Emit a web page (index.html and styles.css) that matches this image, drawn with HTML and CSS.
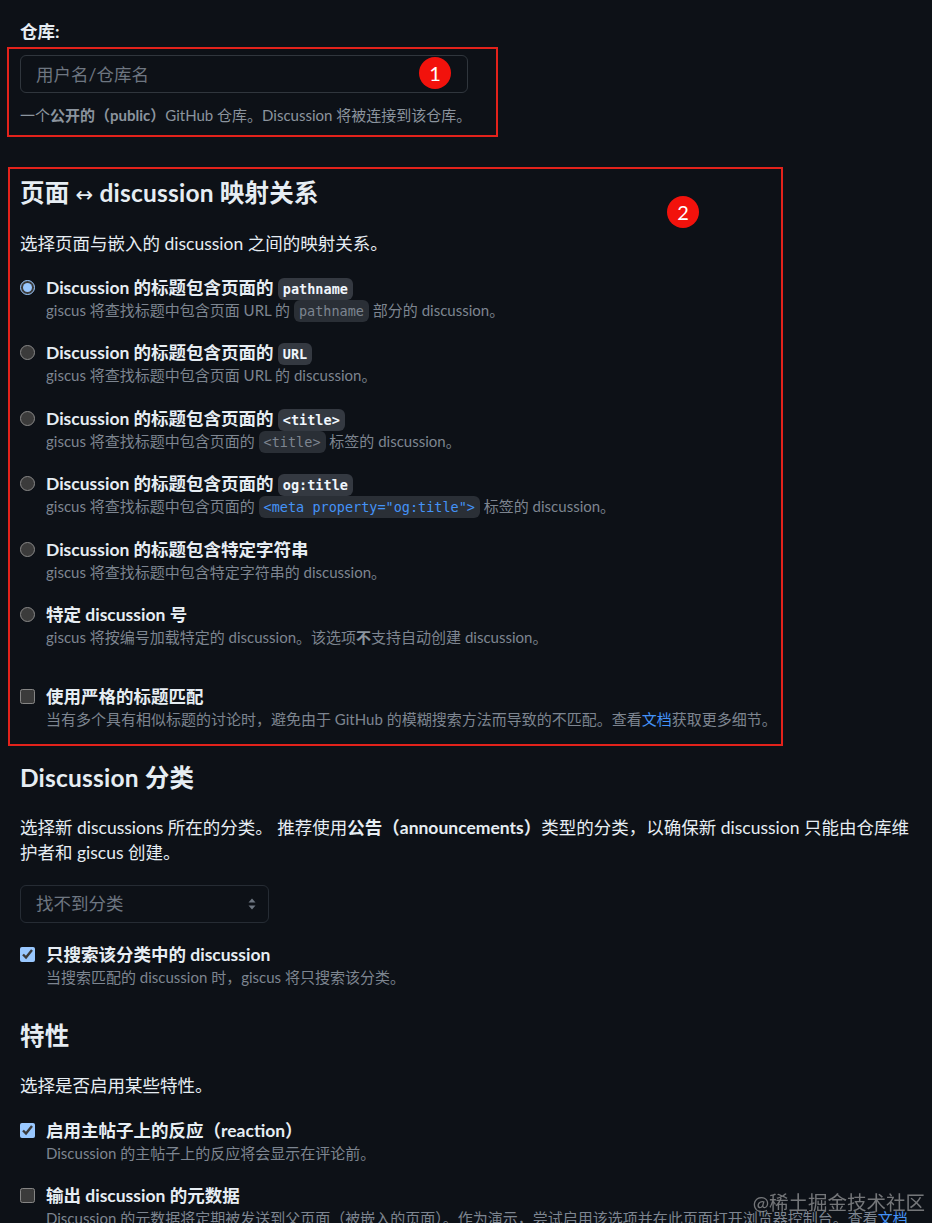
FILE: index.html
```html
<!DOCTYPE html>
<html lang="zh-CN">
<head>
  <meta charset="UTF-8" />
  <title>giscus 配置</title>
  <link rel="stylesheet" href="styles.css">
</head>
<body>
  <div class="config">
    <div class="repo-label">仓库:</div>
    <div class="mark mark-repo">
      <input class="repo-input" type="text" placeholder="用户名/仓库名">
      <p class="help">一个<strong>公开的（public）</strong>GitHub 仓库。Discussion 将被连接到该仓库。</p>
      <span class="badge badge-1">1</span>
    </div>

    <div class="mark mark-mapping">
      <h2>页面 <span class="arrow">↔</span> discussion 映射关系</h2>
      <p class="lead">选择页面与嵌入的 discussion 之间的映射关系。</p>

      <div class="options">
        <label class="option">
          <input type="radio" name="mapping" checked>
          <div>
            <div class="option-title">Discussion 的标题包含页面的 <code>pathname</code></div>
            <div class="option-desc">giscus 将查找标题中包含页面 URL 的 <code>pathname</code> 部分的 discussion。</div>
          </div>
        </label>
        <label class="option">
          <input type="radio" name="mapping">
          <div>
            <div class="option-title">Discussion 的标题包含页面的 <code>URL</code></div>
            <div class="option-desc">giscus 将查找标题中包含页面 URL 的 discussion。</div>
          </div>
        </label>
        <label class="option">
          <input type="radio" name="mapping">
          <div>
            <div class="option-title">Discussion 的标题包含页面的 <code>&lt;title&gt;</code></div>
            <div class="option-desc">giscus 将查找标题中包含页面的 <code>&lt;title&gt;</code> 标签的 discussion。</div>
          </div>
        </label>
        <label class="option">
          <input type="radio" name="mapping">
          <div>
            <div class="option-title">Discussion 的标题包含页面的 <code>og:title</code></div>
            <div class="option-desc">giscus 将查找标题中包含页面的 <code class="code-blue">&lt;meta property="og:title"&gt;</code> 标签的 discussion。</div>
          </div>
        </label>
        <label class="option">
          <input type="radio" name="mapping">
          <div>
            <div class="option-title">Discussion 的标题包含特定字符串</div>
            <div class="option-desc">giscus 将查找标题中包含特定字符串的 discussion。</div>
          </div>
        </label>
        <label class="option">
          <input type="radio" name="mapping">
          <div>
            <div class="option-title">特定 discussion 号</div>
            <div class="option-desc">giscus 将按编号加载特定的 discussion。该选项<strong>不</strong>支持自动创建 discussion。</div>
          </div>
        </label>
      </div>

      <label class="option">
        <input type="checkbox">
        <div>
          <div class="option-title">使用严格的标题匹配</div>
          <div class="option-desc">当有多个具有相似标题的讨论时，避免由于 GitHub 的模糊搜索方法而导致的不匹配。查看<a href="#">文档</a>获取更多细节。</div>
        </div>
      </label>

      <span class="badge badge-2">2</span>
    </div>

    <h2 class="section-title">Discussion 分类</h2>
    <p class="lead">选择新 discussions 所在的分类。 推荐使用<strong>公告（announcements）</strong>类型的分类，以确保新 discussion 只能由仓库维护者和 giscus 创建。</p>

    <div class="select">
      <span>找不到分类</span>
      <svg width="8" height="12" viewBox="0 0 8 12"><path d="M4 0.5 L7.5 4.5 H0.5 Z M0.5 7.5 H7.5 L4 11.5 Z" fill="currentColor"/></svg>
    </div>

    <label class="option option-after-select">
      <input type="checkbox" checked>
      <div>
        <div class="option-title">只搜索该分类中的 discussion</div>
        <div class="option-desc">当搜索匹配的 discussion 时，giscus 将只搜索该分类。</div>
      </div>
    </label>

    <h2 class="section-title section-gap">特性</h2>
    <p class="lead">选择是否启用某些特性。</p>

    <div class="options">
      <label class="option">
        <input type="checkbox" checked>
        <div>
          <div class="option-title">启用主帖子上的反应（reaction）</div>
          <div class="option-desc">Discussion 的主帖子上的反应将会显示在评论前。</div>
        </div>
      </label>
      <label class="option">
        <input type="checkbox">
        <div>
          <div class="option-title">输出 discussion 的元数据</div>
          <div class="option-desc">Discussion 的元数据将定期被发送到父页面（被嵌入的页面）。作为演示，尝试启用该选项并在此页面打开浏览器控制台。查看<a href="#">文档</a>获取更多细节。</div>
        </div>
      </label>
    </div>
  </div>

  <div class="watermark">@稀土掘金技术社区</div>
</body>
</html>
```

FILE: styles.css
```css
:root {
  color-scheme: dark;
}

body {
  margin: 0;
  background: #0d1117;
  color: #e6edf3;
  font-family: Lato, "Noto Sans CJK SC", sans-serif;
  font-size: 17.5px;
  line-height: 24px;
}

.config {
  padding: 20px 18px 40px 20px;
}

.repo-label {
  font-weight: 700;
  margin-bottom: 3px;
}

/* red annotation frames */
.mark {
  position: relative;
  border: 2px solid #e3221b;
  box-sizing: border-box;
}

.mark-repo {
  width: 491px;
  margin-left: -13px;
  padding: 6px 11px 9px;
}

.mark-mapping {
  width: 775px;
  margin-left: -12px;
  margin-top: 30px;
  padding: 8px 0 14px 10px;
}

.badge {
  position: absolute;
  width: 32px;
  height: 32px;
  border-radius: 50%;
  background: #f2120c;
  color: #fff;
  font-size: 20px;
  line-height: 32px;
  text-align: center;
}

.badge-1 {
  left: 410px;
  top: 8px;
}

.badge-2 {
  left: 657px;
  top: 27px;
}

.repo-input {
  display: block;
  width: 448px;
  height: 38px;
  box-sizing: border-box;
  padding: 0 15px;
  background: transparent;
  border: 1px solid #30363d;
  border-radius: 6px;
  color: #e6edf3;
  font-family: inherit;
  font-size: 17.5px;
  outline: none;
}

.repo-input::placeholder {
  color: #6e7681;
}

.help {
  margin: 11px 0 0;
  font-size: 15px;
  line-height: 22px;
  color: #8b949e;
}

h2 {
  margin: 0 0 21.5px;
  font-size: 24.5px;
  line-height: 32px;
  font-weight: 700;
  letter-spacing: 0.2px;
}

h2 .arrow {
  font-family: "DejaVu Sans", sans-serif;
  font-weight: 400;
  font-size: 21px;
  line-height: 1;
}

.section-title {
  margin-top: 16px;
}

.section-gap {
  margin-top: 32px;
}

.lead {
  margin: 0 0 21.5px;
  line-height: 25px;
}

.options {
  display: flex;
  flex-direction: column;
  gap: 21.4px;
}

.mark-mapping .options {
  margin-bottom: 38px;
}

.option {
  display: flex;
  gap: 11px;
  cursor: pointer;
}

.option input {
  flex: none;
  width: 15px;
  height: 15px;
  margin: 3px 0 0;
}

.option-title {
  font-weight: 700;
  line-height: 22px;
}

.option-desc {
  font-size: 15px;
  line-height: 22px;
  color: #7d8590;
}

.option-desc strong {
  color: #8b949e;
}

code {
  font-family: "DejaVu Sans Mono", "Liberation Mono", monospace;
  font-size: 13.5px;
  line-height: 1;
  padding: 3px 5px;
  border-radius: 6px;
  background: #343941;
}

.option-title code {
  font-weight: 700;
  color: #f0f6fc;
}

.option-desc code {
  background: #2a2f36;
}

.option-desc .code-blue {
  color: #4493f8;
}

a {
  color: #4493f8;
  text-decoration: none;
}

.select {
  display: flex;
  justify-content: space-between;
  align-items: center;
  width: 249px;
  height: 38px;
  box-sizing: border-box;
  margin-top: -2px;
  padding: 0 12px 0 15px;
  border: 1px solid #262c34;
  border-radius: 6px;
  color: #6e7681;
}

.option-after-select {
  margin-top: 21px;
}

.watermark {
  position: fixed;
  right: 7px;
  bottom: 8px;
  font-size: 19.5px;
  line-height: 24px;
  color: rgba(220, 220, 220, 0.5);
}
```
